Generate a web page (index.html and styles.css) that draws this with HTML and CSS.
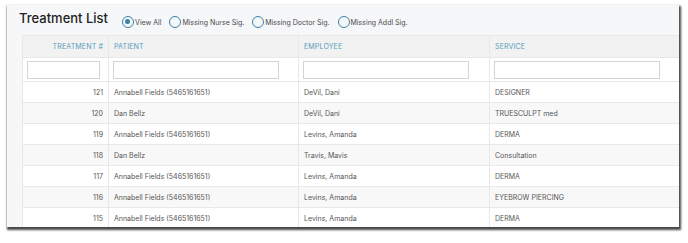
FILE: index.html
```html
<!DOCTYPE html>
<html>
<head>
<meta charset="utf-8">
<link rel="stylesheet" href="styles.css">
</head>
<body>
<div class="panel">
  <div class="toolbar">
    <h1 class="title">Treatment List</h1>
    <div class="filters">
      <label class="radio"><span class="dot checked"></span>View All</label>
      <label class="radio"><span class="dot"></span>Missing Nurse Sig.</label>
      <label class="radio"><span class="dot"></span>Missing Doctor Sig.</label>
      <label class="radio"><span class="dot"></span>Missing Addl Sig.</label>
    </div>
  </div>
  <div class="table-wrap">
    <table class="grid">
      <colgroup>
        <col class="c1"><col class="c2"><col class="c3"><col class="c4">
      </colgroup>
      <thead>
        <tr class="head">
          <th class="num">TREATMENT #</th>
          <th>PATIENT</th>
          <th>EMPLOYEE</th>
          <th>SERVICE</th>
        </tr>
        <tr class="filter">
          <td><div class="input"></div></td>
          <td><div class="input"></div></td>
          <td><div class="input"></div></td>
          <td><div class="input"></div></td>
        </tr>
      </thead>
      <tbody>
        <tr><td class="num">121</td><td>Annabell Fields (5465161651)</td><td>DeVil, Dani</td><td>DESIGNER</td></tr>
        <tr><td class="num">120</td><td>Dan Bellz</td><td>DeVil, Dani</td><td>TRUESCULPT med</td></tr>
        <tr><td class="num">119</td><td>Annabell Fields (5465161651)</td><td>Levins, Amanda</td><td>DERMA</td></tr>
        <tr><td class="num">118</td><td>Dan Bellz</td><td>Travis, Mavis</td><td>Consultation</td></tr>
        <tr><td class="num">117</td><td>Annabell Fields (5465161651)</td><td>Levins, Amanda</td><td>DERMA</td></tr>
        <tr><td class="num">116</td><td>Annabell Fields (5465161651)</td><td>Levins, Amanda</td><td>EYEBROW PIERCING</td></tr>
        <tr><td class="num">115</td><td>Annabell Fields (5465161651)</td><td>Levins, Amanda</td><td>DERMA</td></tr>
      </tbody>
    </table>
  </div>
</div>
</body>
</html>
```

FILE: styles.css
```css
* { box-sizing: border-box; }
html, body { margin: 0; padding: 0; background: #fff; }
body {
  font-family: Inter, "Noto Sans", sans-serif;
  width: 688px;
  height: 243px;
  overflow: hidden;
  padding: 5px 0 0 7px;
}
.panel {
  width: 672px;
  height: 222px;
  background: #f6f7f9;
  overflow: hidden;
  box-shadow: 1px 2px 2px 1px rgba(0, 0, 0, 0.72);
  display: flex;
  flex-direction: column;
}
.toolbar {
  height: 30px;
  flex: none;
  display: flex;
  align-items: center;
  padding: 0 0 0 12px;
}
.title {
  margin: -4px 0 0 0;
  font-size: 13px;
  font-weight: 500;
  color: #222;
}
.filters {
  display: flex;
  align-items: center;
  gap: 8px;
  margin-left: 14px;
  margin-top: 4px;
}
.radio {
  display: flex;
  align-items: center;
  font-size: 7px;
  color: #4a4a4a;
  gap: 1px;
}
.dot {
  width: 12px;
  height: 12px;
  border: 1.3px solid #3a83a8;
  border-radius: 50%;
  display: inline-block;
  position: relative;
}
.dot.checked::after {
  content: "";
  position: absolute;
  left: 2px; top: 2px;
  width: 5.4px; height: 5.4px;
  border-radius: 50%;
  background: #3a83a8;
}
.table-wrap {
  padding-left: 15px;
}
.grid {
  border-collapse: collapse;
  table-layout: fixed;
  width: 657px;
  font-size: 7px;
  color: #555;
}
.c1 { width: 86px; }
.c2 { width: 190px; }
.c3 { width: 191px; }
.c4 { width: 190px; }
.grid th, .grid td {
  border: 1px solid #e8e8e8;
  padding: 0 5px;
  text-align: left;
  white-space: nowrap;
}
.grid .num { text-align: right; }
.head th {
  height: 22px;
  background: #f2f2f2;
  color: #5a9dbd;
  font-weight: 400;
  font-size: 7.1px;
  letter-spacing: 0.1px;
}
.filter td {
  height: 24px;
  background: #fff;
  padding: 0 4px;
}
.input {
  height: 18px;
  border: 1px solid #d4d4d4;
  background: #fff;
  width: 100%;
}
.filter td:nth-child(1) .input { width: 73px; }
.filter td:nth-child(2) .input { width: 166px; }
.filter td:nth-child(3) .input { width: 166px; }
.filter td:nth-child(4) .input { width: 166px; }
tbody td { height: 21px; background: #fff; }
tbody tr:nth-child(even) td { background: #f8f8f8; }
```
